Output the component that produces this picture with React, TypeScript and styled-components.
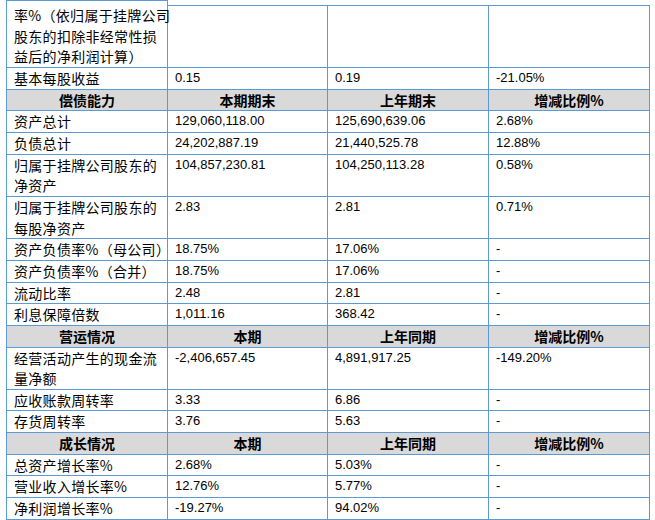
import React from 'react';
import styled, { createGlobalStyle } from 'styled-components';

const GlobalStyle = createGlobalStyle`
  body {
    margin: 0;
    background: #fff;
    color: #000;
    font-family: "Noto Sans CJK SC", "Noto Sans", sans-serif;
  }
`;

const Page = styled.div`
  padding-left: 6px;
`;

const Table = styled.table`
  border-collapse: collapse;
  table-layout: fixed;
  width: 643px;
`;

const Cell = styled.td<{ $open?: 'top' | 'bottom' }>`
  border: 1px solid #5b9bd5;
  padding: 0 4px 0 7px;
  vertical-align: top;
  line-height: 20.65px;
  font-size: 14px;
  white-space: nowrap;
  ${(p) => (p.$open === 'top' ? 'border-top: none;' : '')}
  ${(p) => (p.$open === 'bottom' ? 'border-bottom: none; height: 4px; line-height: 4px;' : '')}
`;

const Label = styled(Cell)`
  letter-spacing: 0.3px;
`;

const Num = styled(Cell)`
  font-family: "Liberation Sans", Arial, sans-serif;
  font-size: 13px;
`;

const Head = styled.td`
  border: 1px solid #5b9bd5;
  background: #d9d9d9;
  padding: 0;
  text-align: center;
  font-weight: 700;
  font-size: 14px;
  line-height: 20.65px;
`;

const Strip = styled.td`
  height: 4px;
  padding: 0;
  border: none;
  border-bottom: 1px solid #5b9bd5;
`;

type Row =
  | { head: string[] }
  | { label: string[]; values: string[]; open?: boolean };

const rows: Row[] = [
  {
    label: ['率%（依归属于挂牌公司', '股东的扣除非经常性损', '益后的净利润计算）'],
    values: ['', '', ''],
    open: true,
  },
  { label: ['基本每股收益'], values: ['0.15', '0.19', '-21.05%'] },
  { head: ['偿债能力', '本期期末', '上年期末', '增减比例%'] },
  { label: ['资产总计'], values: ['129,060,118.00', '125,690,639.06', '2.68%'] },
  { label: ['负债总计'], values: ['24,202,887.19', '21,440,525.78', '12.88%'] },
  { label: ['归属于挂牌公司股东的', '净资产'], values: ['104,857,230.81', '104,250,113.28', '0.58%'] },
  { label: ['归属于挂牌公司股东的', '每股净资产'], values: ['2.83', '2.81', '0.71%'] },
  { label: ['资产负债率%（母公司）'], values: ['18.75%', '17.06%', '-'] },
  { label: ['资产负债率%（合并）'], values: ['18.75%', '17.06%', '-'] },
  { label: ['流动比率'], values: ['2.48', '2.81', '-'] },
  { label: ['利息保障倍数'], values: ['1,011.16', '368.42', '-'] },
  { head: ['营运情况', '本期', '上年同期', '增减比例%'] },
  { label: ['经营活动产生的现金流', '量净额'], values: ['-2,406,657.45', '4,891,917.25', '-149.20%'] },
  { label: ['应收账款周转率'], values: ['3.33', '6.86', '-'] },
  { label: ['存货周转率'], values: ['3.76', '5.63', '-'] },
  { head: ['成长情况', '本期', '上年同期', '增减比例%'] },
  { label: ['总资产增长率%'], values: ['2.68%', '5.03%', '-'] },
  { label: ['营业收入增长率%'], values: ['12.76%', '5.77%', '-'] },
  { label: ['净利润增长率%'], values: ['-19.27%', '94.02%', '-'] },
];

const lines = (parts: string[]) =>
  parts.map((t, i) => (
    <React.Fragment key={i}>
      {i > 0 && <br />}
      {t}
    </React.Fragment>
  ));

const App: React.FC = () => {
  return (
    <Page>
      <GlobalStyle />
      <Table>
        <colgroup>
          <col style={{ width: 161 }} />
          <col style={{ width: 160 }} />
          <col style={{ width: 161 }} />
          <col style={{ width: 161 }} />
        </colgroup>
        <tbody>
          {/* the first label cell carries on from the part above the cut */}
          <tr>
            <Label $open="bottom" />
            <Strip />
            <Strip />
            <Strip />
          </tr>
          {rows.map((r, i) =>
            'head' in r ? (
              <tr key={i}>
                {r.head.map((h) => (
                  <Head key={h}>{h}</Head>
                ))}
              </tr>
            ) : (
              <tr key={i}>
                <Label $open={r.open ? 'top' : undefined}>{lines(r.label)}</Label>
                {r.values.map((v, j) => (
                  <Num key={j}>{v}</Num>
                ))}
              </tr>
            )
          )}
        </tbody>
      </Table>
    </Page>
  );
};

export default App;
